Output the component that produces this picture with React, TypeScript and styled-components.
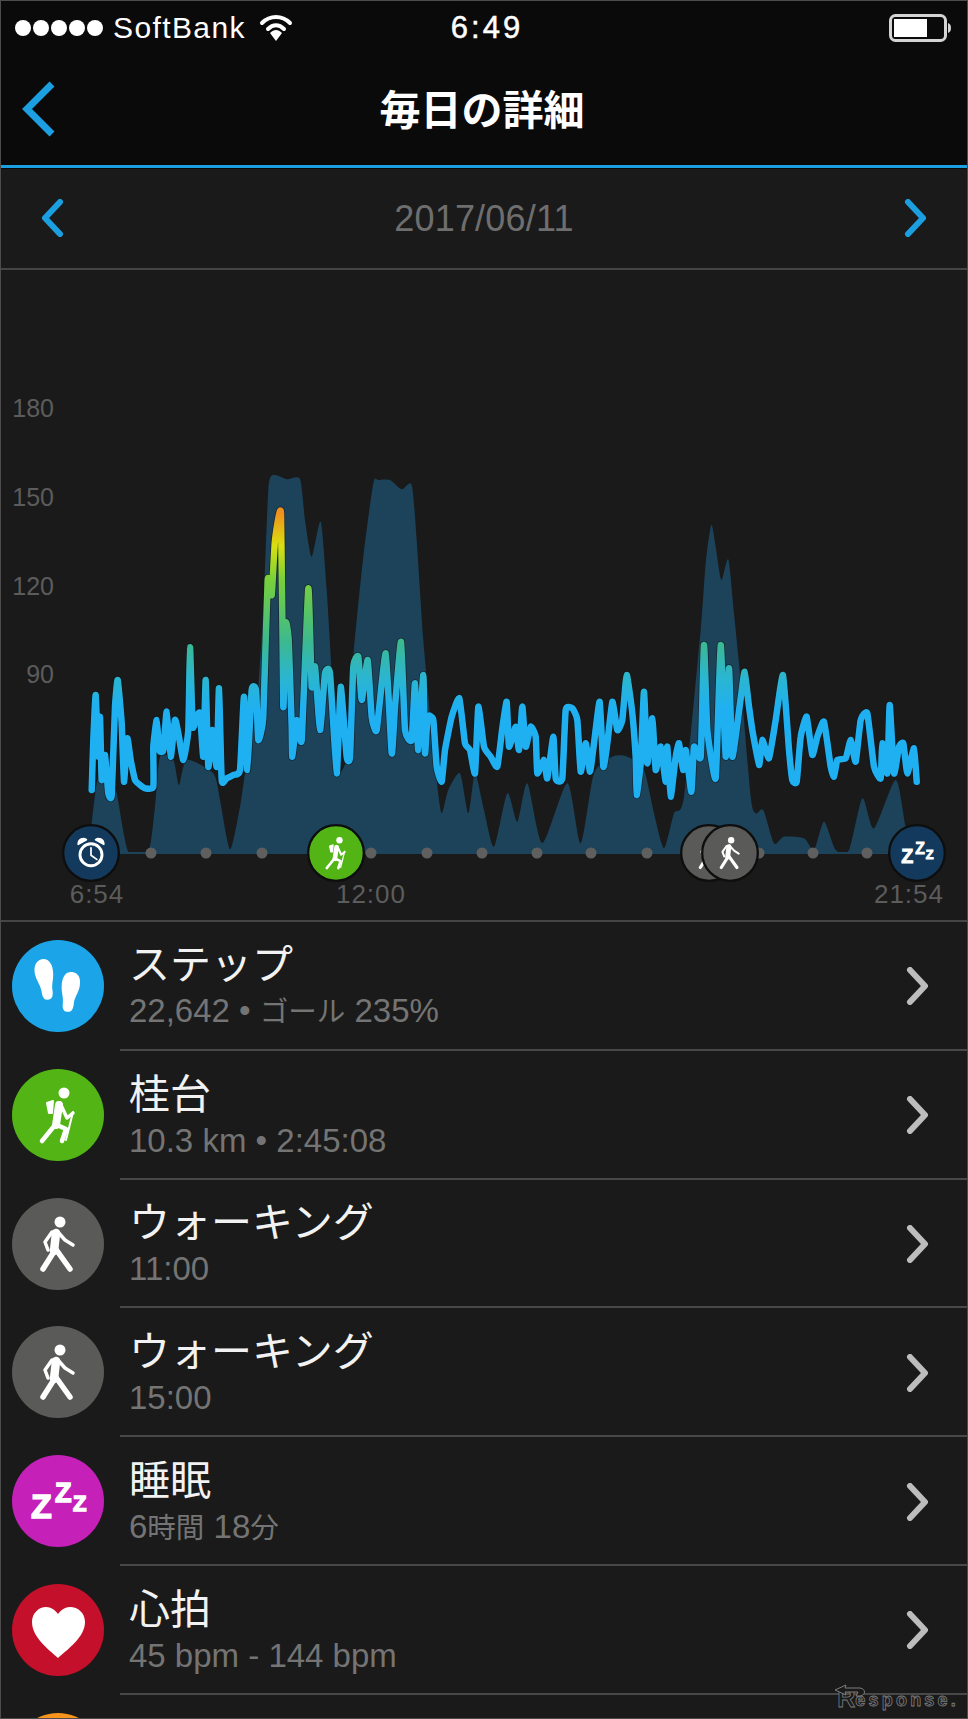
import React from "react"
import styled, { createGlobalStyle } from "styled-components"

const GlobalStyle = createGlobalStyle`
  html, body {
    margin: 0;
    padding: 0;
    background: #1a1a1a;
  }
`

const SANS = `"Liberation Sans", "Noto Sans CJK JP", sans-serif`
const BLUE = "#1c9fe0"

const Page = styled.div`
  position: relative;
  box-sizing: border-box;
  width: 968px;
  height: 1719px;
  overflow: hidden;
  border: 1px solid #4c4c4c;
  background: #1a1a1a;
  font-family: ${SANS};
`

const Header = styled.header`
  background: #0a0a0a;
  border-bottom: 3px solid ${BLUE};
  box-shadow: 0 1px 0 #0a0a0a;
`

const StatusBar = styled.div`
  display: grid;
  grid-template-columns: 1fr auto 1fr;
  align-items: center;
  height: 53px;
  padding: 0 14px;
  color: #fff;
`

const StatusLeft = styled.div`
  display: flex;
  align-items: center;
  font-size: 30px;
`

const Signal = styled.div`
  display: flex;
  gap: 2px;
  margin-right: 10px;
`

const SignalDot = styled.span`
  width: 16px;
  height: 16px;
  border-radius: 50%;
  background: #fff;
`

const Carrier = styled.span`
  letter-spacing: 1.4px;
  margin-right: 13px;
`

const Clock = styled.div`
  margin-left: 6px;
  font-size: 31px;
  letter-spacing: 3px;
  -webkit-text-stroke: 0.5px #fff;
`

const StatusRight = styled.div`
  display: flex;
  justify-content: flex-end;
`

const NavBar = styled.div`
  position: relative;
  display: flex;
  align-items: center;
  justify-content: center;
  height: 111px;
`

const NavBack = styled.svg`
  position: absolute;
  left: 19px;
  top: 26px;
`

const NavTitle = styled.h1`
  margin: 0 4px 6px 0;
  color: #fff;
  font-size: 41px;
  font-weight: 700;
  font-family: "Noto Sans CJK JP", sans-serif;
`

const DateBar = styled.div`
  display: flex;
  align-items: center;
  justify-content: space-between;
  box-sizing: border-box;
  height: 102px;
  padding: 0 39px;
  border-bottom: 2px solid #444;
`

const DateText = styled.div`
  color: #6e6e6e;
  font-size: 36px;
  letter-spacing: 0.2px;
  padding-top: 1px;
`

const ChartPanel = styled.section`
  height: 650px;
  border-bottom: 2px solid #444;
`

const ChartSvg = styled.svg`
  display: block;
`

const AxisLabel = styled.text`
  fill: #5c5c5c;
  font-family: ${SANS};
  font-size: 25px;
  text-anchor: end;
`

const TimeLabel = styled.text`
  fill: #5c5c5c;
  font-family: ${SANS};
  font-size: 26px;
  letter-spacing: 1px;
  text-anchor: middle;
`

const Row = styled.div`
  display: flex;
  height: 128.8px;
`

const IconCell = styled.div`
  flex: 0 0 119px;
  padding: 18px 0 0 11px;
  box-sizing: border-box;
`

const RowBody = styled.div`
  flex: 1;
  display: flex;
  align-items: center;
  justify-content: space-between;
  padding: 2px 37px 0 9px;
  border-bottom: 2px solid #484848;
`

const RowText = styled.div`
  display: flex;
  flex-direction: column;
`

const RowTitle = styled.div`
  color: #f2f2f2;
  font-size: 41px;
  line-height: 48px;
`

const RowSub = styled.div`
  color: #747474;
  font-size: 33px;
  line-height: 38px;
  margin-top: 3px;
`

const SubCjk = styled.span`
  font-size: 28.5px;
`

const Watermark = styled.div`
  position: absolute;
  right: 8px;
  bottom: 9px;
  display: flex;
  align-items: flex-end;
  color: #1a1a1a;
  font-size: 18px;
  font-weight: 700;
  line-height: 1;
  letter-spacing: 3.2px;
  -webkit-text-stroke: 0.8px #7c7c7c;
`

const WatermarkArrow = styled.svg`
  position: absolute;
  left: -3px;
  top: -4px;
`

const WatermarkR = styled.span`
  font-size: 25px;
  line-height: 0.85;
  letter-spacing: 0;
`

// chart outlines, traced from the screenshot at 3x
const fromLeft = (pts: number[]) => pairs(pts, 0, 440)
const fromRight = (pts: number[]) => pairs(pts, 484, 480)

type Pt = [number, number]

function pairs(pts: number[], ox: number, oy: number) {
  const out: Pt[] = []
  for (let i = 0; i < pts.length; i += 2) {
    out.push([ox + pts[i] / 3, oy + pts[i + 1] / 3])
  }
  return out
}

// catmull-rom through the traced points, tension sets how round it gets
function smooth(points: Pt[], tension: number) {
  let d = `M${points[0][0].toFixed(1)} ${points[0][1].toFixed(1)}`
  for (let i = 0; i < points.length - 1; i++) {
    const p0 = points[Math.max(i - 1, 0)]
    const p1 = points[i]
    const p2 = points[i + 1]
    const p3 = points[Math.min(i + 2, points.length - 1)]
    const c1x = p1[0] + ((p2[0] - p0[0]) / 6) * tension
    const c1y = p1[1] + ((p2[1] - p0[1]) / 6) * tension
    const c2x = p2[0] - ((p3[0] - p1[0]) / 6) * tension
    const c2y = p2[1] - ((p3[1] - p1[1]) / 6) * tension
    d += ` C${c1x.toFixed(1)} ${c1y.toFixed(1)} ${c2x.toFixed(1)} ${c2y.toFixed(1)} ${p2[0].toFixed(1)} ${p2[1].toFixed(1)}`
  }
  return d
}

const areaPath =
  smooth(
    [
      [88, 853] as Pt,
      ...fromLeft([
        275, 1150, 290, 1030, 305, 1010, 330, 1020, 350, 1060, 385, 1235, 445, 1235, 465, 1100, 480, 950, 520, 960, 537,
        1035, 560, 960, 640, 1000, 660, 1080, 690, 1228, 720, 1100, 735, 1000, 770, 800, 790, 500, 805, 150, 820, 105,
        860, 118, 900, 118, 915, 240, 935, 350, 962, 245, 980, 450, 995, 700, 1000, 860, 1010, 1000, 1040, 950, 1060, 650,
        1090, 350, 1120, 130, 1135, 120, 1170, 120, 1205, 148, 1235, 135, 1250, 300, 1270, 600, 1290, 820, 1310, 1020,
        1325, 1120, 1345, 1050, 1380, 1000, 1405, 1120, 1425, 1000,
      ]),
      ...fromRight([
        0, 990, 30, 1100, 70, 940, 100, 1025, 130, 910, 175, 1090, 250, 910, 290, 1090, 330, 880, 385, 830, 430, 830, 480,
        870, 510, 1000, 540, 1105, 570, 1000, 600, 950, 650, 450, 665, 250, 682, 135, 695, 200, 712, 300, 733, 238, 750,
        400, 770, 600, 800, 950, 815, 1000, 838, 990, 870, 1090, 900, 1070, 960, 1075, 990, 1110, 1020, 1025, 1055, 1110,
        1095, 1110, 1135, 955, 1170, 1045, 1235, 900, 1265, 1040, 1290, 1115,
      ]),
    ],
    0.7,
  ) + " Z"

const heartPath = smooth(
  [
    ...fromLeft([
      275, 1050, 280, 900, 287, 765, 295, 950, 300, 830, 305, 1020, 315, 945, 325, 1060, 335, 1065, 345, 800, 353, 720,
      365, 850, 372, 1025, 382, 895, 392, 960, 405, 1020, 420, 1035, 435, 1045, 460, 1040, 460, 920, 470, 840, 478, 930,
      490, 930, 500, 815, 512, 950, 525, 840, 535, 880, 550, 960, 565, 870, 570, 622, 578, 860, 590, 830, 600, 820, 610,
      950, 617, 720, 625, 980, 637, 870, 650, 980, 657, 745, 665, 1020, 680, 1015, 700, 1005, 720, 990, 732, 770, 742,
      990, 755, 750, 768, 750, 775, 900, 790, 830, 803, 420, 815, 465, 825, 300, 843, 220, 850, 800, 857, 550, 866, 600,
      875, 860, 877, 950, 890, 840, 905, 900, 925, 445, 935, 740, 945, 680, 960, 870, 975, 700, 990, 700, 1010, 1000,
      1022, 740, 1040, 950, 1050, 950, 1060, 680, 1075, 650, 1085, 780, 1103, 660, 1115, 830, 1130, 870, 1157, 640, 1175,
      940, 1185, 800, 1203, 605, 1215, 870, 1235, 900, 1245, 730, 1255, 930, 1270, 705, 1275, 940, 1283, 830, 1300, 840,
      1310, 980, 1325, 1025, 1335, 930, 1355, 830, 1378, 775, 1395, 910, 1410, 930, 1425, 1000, 1435, 800,
    ]),
    ...fromRight([
      0, 800, 20, 830, 40, 860, 55, 745, 68, 665, 75, 800, 95, 740, 105, 810, 115, 680, 125, 800, 140, 740, 155, 770, 160,
      880, 180, 840, 190, 895, 208, 770, 215, 895, 235, 895, 245, 690, 265, 685, 280, 720, 290, 875, 305, 790, 318, 875,
      330, 790, 347, 665, 358, 860, 370, 790, 385, 665, 400, 750, 415, 720, 428, 585, 445, 700, 455, 830, 458, 945, 470,
      850, 480, 635, 490, 850, 505, 715, 515, 870, 530, 800, 545, 905, 550, 800, 560, 950, 575, 830, 585, 790, 597, 870,
      605, 810, 622, 935, 630, 800, 650, 830, 660, 495, 670, 750, 695, 895, 710, 495, 725, 830, 735, 565, 745, 830, 770,
      655, 782, 575, 795, 680, 805, 750, 825, 855, 835, 780, 855, 835, 875, 720, 897, 585, 915, 810, 925, 900, 938, 905,
      950, 770, 968, 710, 985, 825, 1000, 770, 1020, 725, 1040, 860, 1050, 890, 1060, 840, 1085, 835, 1100, 780, 1115,
      845, 1130, 720, 1150, 700, 1170, 860, 1190, 895, 1195, 790, 1210, 880, 1217, 675, 1230, 880, 1245, 800, 1258, 790,
      1270, 880, 1290, 805, 1298, 905,
    ]),
  ],
  0.45,
)

const axisLabels = [
  { value: "180", y: 417 },
  { value: "150", y: 506 },
  { value: "120", y: 595 },
  { value: "90", y: 683 },
]

const timelineDots = [151, 206, 262, 371, 427, 482, 537, 591, 647, 759, 813, 867]

const Walker = () => (
  <g fill="none" stroke="#fff" strokeLinecap="round" strokeLinejoin="round">
    <circle cx="48" cy="24" r="5.5" fill="#fff" stroke="none" />
    <path d="M44 35 L42 53" strokeWidth="8.5" />
    <path d="M43 52 L31 71" strokeWidth="5.5" />
    <path d="M43 50 L58 71" strokeWidth="5.5" />
    <path d="M45 33 L53 42 L61 47" strokeWidth="3.5" />
    <path d="M40 34 L33 44 L36 52" strokeWidth="3.5" />
  </g>
)

const Hiker = () => (
  <g fill="none" stroke="#fff" strokeLinecap="round" strokeLinejoin="round">
    <circle cx="52" cy="24" r="5.5" fill="#fff" stroke="none" />
    <path d="M35 34 L41 32 L40 44 L37 44 Z" fill="#fff" strokeWidth="2" />
    <path d="M47 36 L44 56" strokeWidth="8" />
    <path d="M43 56 L30 72" strokeWidth="4.5" />
    <path d="M45 56 L54 60 L50 72" strokeWidth="4.5" />
    <path d="M48 34 L55 49 L61 44" strokeWidth="3.5" />
    <path d="M61 43 L54 71" strokeWidth="2" />
  </g>
)

const Feet = () => (
  <g fill="#fff">
    <path
      transform="rotate(-8 33 40)"
      d="M33 19 C40 19 43 26 42 35 C41 42 39 45 39 51 C39 58 37 60 33 60 C29 60 28 56 28 51 C28 45 25 41 24 34 C23 25 27 19 33 19 Z"
    />
    <path
      transform="rotate(6 58 52)"
      d="M58 32 C64 32 68 37 67 46 C66 53 63 57 63 63 C63 70 61 72 57 72 C53 72 52 69 52 63 C52 57 49 53 49 45 C49 37 52 32 58 32 Z"
    />
  </g>
)

const Zzz = () => (
  <g fill="#fff" stroke="#fff" strokeWidth="1.5" fontFamily={SANS} fontWeight="700">
    <text x="19" y="63" fontSize="34">
      Z
    </text>
    <text x="43" y="47" fontSize="27">
      Z
    </text>
    <text x="61" y="56" fontSize="22">
      Z
    </text>
  </g>
)

const Heart = () => (
  <path
    fill="#fff"
    d="M46 74 C36 65 20 53 20 38 C20 29 27 23 34 23 C39 23 43 26 46 30 C49 26 53 23 58 23 C66 23 73 29 73 38 C73 53 56 65 46 74 Z"
  />
)

const AlarmClock = () => (
  <g fill="none" stroke="#fff" strokeLinecap="round" strokeLinejoin="round">
    <circle cx="46" cy="49" r="19" strokeWidth="5" />
    <path d="M46 37 L46 50 L56 57" strokeWidth="3" />
    <path d="M24 31 C24 22 33 19 38 23 Z" fill="#fff" strokeWidth="3" />
    <path d="M68 31 C68 22 59 19 54 23 Z" fill="#fff" strokeWidth="3" />
  </g>
)

const CircleIcon = ({ color, children }: { color: string; children: React.ReactNode }) => (
  <svg width={92} height={92} viewBox="0 0 92 92">
    <circle cx="46" cy="46" r="46" fill={color} />
    {children}
  </svg>
)

// timeline marker: same 92-unit glyphs, scaled down onto the chart
const Marker = ({ cx, color, children }: { cx: number; color: string; children?: React.ReactNode }) => (
  <svg x={cx - 29} y={853 - 29} width={58} height={58} viewBox="-4 -4 100 100">
    <circle cx="46" cy="46" r="48" fill={color} stroke="#0e0e0e" strokeWidth="4" />
    {children}
  </svg>
)

const Chevron = ({ color, width = 6 }: { color: string; width?: number }) => (
  <svg width={26} height={38} viewBox="0 0 26 38">
    <polyline
      points="6,3 21,19 6,35"
      fill="none"
      stroke={color}
      strokeWidth={width}
      strokeLinecap="round"
      strokeLinejoin="round"
    />
  </svg>
)

const rows = [
  {
    title: "ステップ",
    sub: (
      <>
        22,642 • <SubCjk>ゴール</SubCjk> 235%
      </>
    ),
    color: "#1ba5e8",
    icon: <Feet />,
  },
  { title: "桂台", sub: "10.3 km • 2:45:08", color: "#52b415", icon: <Hiker /> },
  { title: "ウォーキング", sub: "11:00", color: "#5a5a58", icon: <Walker /> },
  { title: "ウォーキング", sub: "15:00", color: "#5a5a58", icon: <Walker /> },
  {
    title: "睡眠",
    sub: (
      <>
        6<SubCjk>時間</SubCjk> 18<SubCjk>分</SubCjk>
      </>
    ),
    color: "#c520b8",
    icon: <Zzz />,
  },
  { title: "心拍", sub: "45 bpm - 144 bpm", color: "#c4102a", icon: <Heart /> },
  { title: "", sub: "", color: "#f7941d", icon: null },
]

const Chart = () => (
  <ChartSvg width={966} height={650} viewBox="1 270 966 650">
    <defs>
      <linearGradient id="hr" gradientUnits="userSpaceOnUse" x1="0" y1="513" x2="0" y2="720">
        <stop offset="0" stopColor="#f0901e" />
        <stop offset="0.1" stopColor="#e0c414" />
        <stop offset="0.16" stopColor="#d8e010" />
        <stop offset="0.32" stopColor="#78d03a" />
        <stop offset="0.62" stopColor="#3cb98e" />
        <stop offset="0.78" stopColor="#2cb6cc" />
        <stop offset="0.95" stopColor="#1fb0f2" />
      </linearGradient>
      <clipPath id="aboveBase">
        <rect x="0" y="270" width="968" height="584" />
      </clipPath>
    </defs>
    {axisLabels.map((label) => (
      <AxisLabel key={label.value} x={54} y={label.y}>
        {label.value}
      </AxisLabel>
    ))}
    <path d={areaPath} fill="#1c435a" clipPath="url(#aboveBase)" />
    <line x1={100} y1={853} x2={900} y2={853} stroke="#1c435a" strokeWidth={2} />
    <path d={heartPath} fill="none" stroke="#101418" strokeOpacity={0.6} strokeWidth={8} strokeLinejoin="round" />
    <path d={heartPath} fill="none" stroke="url(#hr)" strokeWidth={6.5} strokeLinejoin="round" strokeLinecap="round" />
    {timelineDots.map((x) => (
      <circle key={x} cx={x} cy={853} r={5.5} fill="#5f5f5f" />
    ))}
    <Marker cx={91} color="#133a5c">
      <AlarmClock />
    </Marker>
    <Marker cx={336} color="#52b415">
      <Hiker />
    </Marker>
    <Marker cx={709} color="#5a5a58">
      <Walker />
    </Marker>
    <Marker cx={730} color="#5a5a58">
      <Walker />
    </Marker>
    <Marker cx={917} color="#133a5c">
      <Zzz />
    </Marker>
    <TimeLabel x={97} y={903}>
      6:54
    </TimeLabel>
    <TimeLabel x={371} y={903}>
      12:00
    </TimeLabel>
    <TimeLabel x={909} y={903}>
      21:54
    </TimeLabel>
  </ChartSvg>
)

const App = () => (
  <Page>
    <GlobalStyle />
    <Header>
      <StatusBar>
        <StatusLeft>
          <Signal>
            {[0, 1, 2, 3, 4].map((i) => (
              <SignalDot key={i} />
            ))}
          </Signal>
          <Carrier>SoftBank</Carrier>
          <svg width={34} height={28} viewBox="0 0 34 28">
            <path d="M3 9 C11 1 23 1 31 9" fill="none" stroke="#fff" strokeWidth="4" strokeLinecap="round" />
            <path d="M9 15 C14 10 20 10 25 15" fill="none" stroke="#fff" strokeWidth="4" strokeLinecap="round" />
            <path d="M11 19 C15 15 19 15 23 19 L17 27 Z" fill="#fff" />
          </svg>
        </StatusLeft>
        <Clock>6:49</Clock>
        <StatusRight>
          <svg width={64} height={30} viewBox="0 0 64 30">
            <rect x="1.5" y="2.5" width="55" height="25" rx="5" fill="none" stroke="#d4d4d4" strokeWidth="3" />
            <rect x="5" y="6" width="33" height="18" fill="#fff" />
            <path d="M59 10 C63 11 63 19 59 20 Z" fill="#d4d4d4" />
          </svg>
        </StatusRight>
      </StatusBar>
      <NavBar>
        <NavBack width={38} height={58} viewBox="0 0 38 58">
          <polyline points="32,4 7,29 32,54" fill="none" stroke={BLUE} strokeWidth="7" strokeLinejoin="miter" />
        </NavBack>
        <NavTitle>毎日の詳細</NavTitle>
      </NavBar>
    </Header>
    <DateBar>
      <svg width={26} height={38} viewBox="0 0 26 38">
        <polyline points="20,3 5,19 20,35" fill="none" stroke={BLUE} strokeWidth="6" strokeLinecap="round" strokeLinejoin="round" />
      </svg>
      <DateText>2017/06/11</DateText>
      <Chevron color={BLUE} />
    </DateBar>
    <ChartPanel>
      <Chart />
    </ChartPanel>
    {rows.map((row, i) => (
      <Row key={i}>
        <IconCell>
          <CircleIcon color={row.color}>{row.icon}</CircleIcon>
        </IconCell>
        <RowBody>
          <RowText>
            <RowTitle>{row.title}</RowTitle>
            <RowSub>{row.sub}</RowSub>
          </RowText>
          {row.title && <Chevron color="#bdbdbd" />}
        </RowBody>
      </Row>
    ))}
    <Watermark>
      <WatermarkArrow width={40} height={14} viewBox="0 0 40 14">
        <path d="M1 6 L12 1 L11 4 L26 4 C32 5 32 11 26 12 L22 12 L24 8 L11 8 L12 11 Z" fill="#1a1a1a" stroke="#7c7c7c" strokeWidth="1" />
      </WatermarkArrow>
      <WatermarkR>R</WatermarkR>esponse.
    </Watermark>
  </Page>
)

export default App
